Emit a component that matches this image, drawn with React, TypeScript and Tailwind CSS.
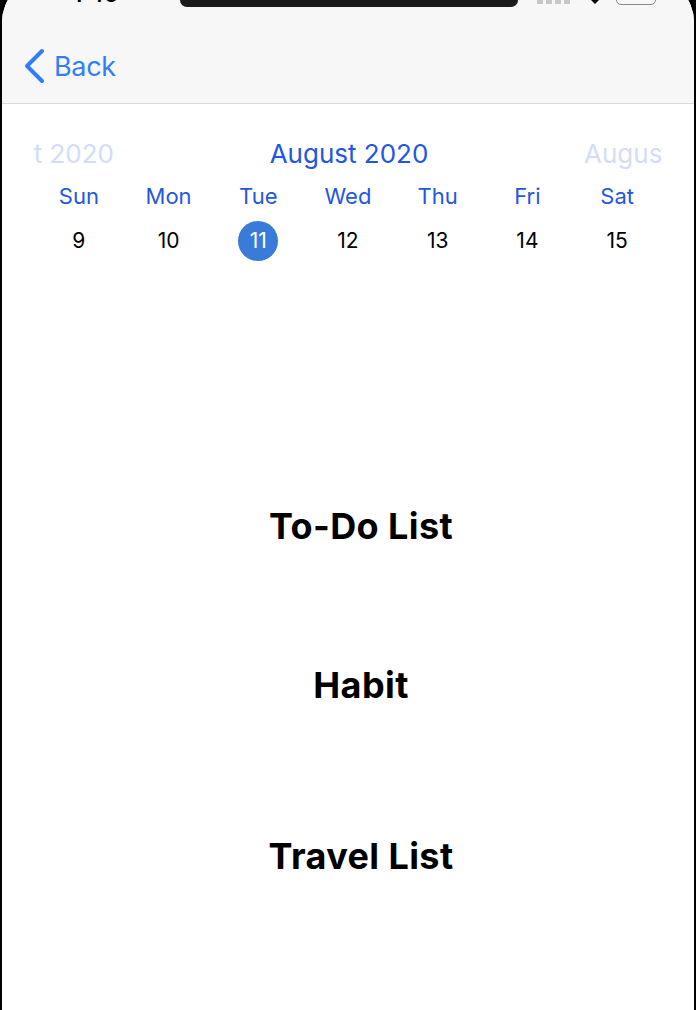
import React from "react";

const days = [
  { n: "Sun", d: 9 },
  { n: "Mon", d: 10 },
  { n: "Tue", d: 11 },
  { n: "Wed", d: 12 },
  { n: "Thu", d: 13 },
  { n: "Fri", d: 14 },
  { n: "Sat", d: 15 },
];

export default function App() {
  return (
    <div
      className="w-[696px] h-[1010px] bg-black overflow-hidden"
      style={{ fontFamily: "Inter, 'Noto Sans', sans-serif" }}
    >
      <div className="relative mx-[2px] mt-[-22px] h-[1032px] bg-white rounded-t-[44px] overflow-hidden flex flex-col">
        {/* status bar overlay */}
        <div className="absolute left-[178px] top-[22px] w-[338px] h-[7px] bg-[#1b1b1b] rounded-b-[14px]" />
        <div className="absolute left-[71px] top-[5px] text-[22px] font-semibold text-black leading-none">1:46</div>
        <div className="absolute left-[535px] top-[22px] flex gap-[3px]">
          <div className="w-[6px] h-[4px] bg-[#c7c7c7]" />
          <div className="w-[6px] h-[4px] bg-[#c7c7c7]" />
          <div className="w-[6px] h-[4px] bg-[#c7c7c7]" />
          <div className="w-[6px] h-[4px] bg-[#c7c7c7]" />
        </div>
        <svg className="absolute left-[586px] top-[22px]" width="14" height="5" viewBox="0 0 14 5">
          <path d="M3 0 L11 0 L7 4 Z" fill="#000" />
        </svg>
        <div className="absolute left-[614px] top-[8px] w-[40px] h-[19px] rounded-[5px] border-[1.5px] border-[#8a8a8a]" />

        {/* nav header */}
        <div className="h-[126px] shrink-0 bg-[#f7f7f7] border-b border-[#d9d9d9] flex items-end pb-[19px] pl-[20px]">
          <div className="flex items-center gap-[8px] text-[#2f7ff7]">
            <svg width="24" height="36" viewBox="0 0 24 36">
              <path d="M20 3 L5 18 L20 33" fill="none" stroke="#2f7ff7" strokeWidth="4" strokeLinecap="round" strokeLinejoin="round" />
            </svg>
            <span className="text-[27px] leading-none tracking-[-0.3px]">Back</span>
          </div>
        </div>

        {/* calendar */}
        <div className="flex flex-col pt-[32px]">
          <div className="flex items-center px-[31px] h-[34px]">
            <div className="w-[81px] flex justify-end overflow-hidden whitespace-nowrap text-[26px] text-[#d3ddf8]">
              August 2020
            </div>
            <div className="flex-1 text-center text-[26px] text-[#2457e0] whitespace-nowrap">August 2020</div>
            <div className="w-[79px] overflow-hidden whitespace-nowrap text-[26px] text-[#d3ddf8]">August 2020</div>
          </div>
          <div className="grid grid-cols-7 px-[32px] mt-[11px]">
            {days.map((x) => (
              <div key={x.n} className="text-center text-[22px] text-[#2457e0] leading-[30px]">
                {x.n}
              </div>
            ))}
          </div>
          <div className="grid grid-cols-7 px-[32px] mt-[10px]">
            {days.map((x) => (
              <div key={x.n} className="flex justify-center">
                {x.d === 11 ? (
                  <div className="w-[40px] h-[40px] rounded-full bg-[#3a7bd9] text-white flex items-center justify-center text-[21px]">
                    {x.d}
                  </div>
                ) : (
                  <div className="h-[40px] flex items-center text-[21px] text-black">{x.d}</div>
                )}
              </div>
            ))}
          </div>
        </div>

        {/* lists */}
        <div className="flex flex-col items-center pl-[26px] pt-[243px] text-black font-bold text-[36px] leading-[44px] tracking-[0.4px]">
          <div>To-Do List</div>
          <div className="mt-[115px]">Habit</div>
          <div className="mt-[127px]">Travel List</div>
        </div>
      </div>
    </div>
  );
}
